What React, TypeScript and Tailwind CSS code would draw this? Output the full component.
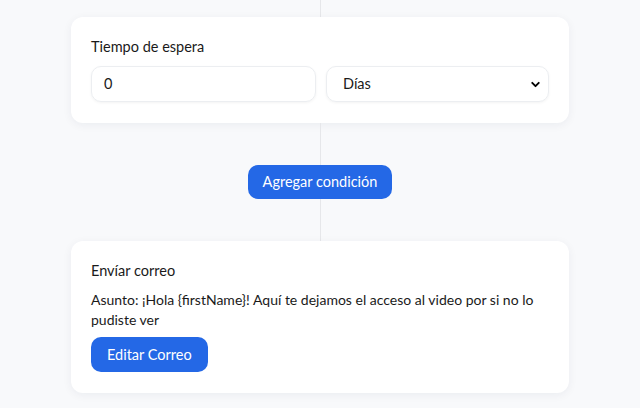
import { ChevronDown } from 'lucide-react'

function Connector({ h }: { h: string }) {
  return <div className={`w-px bg-[#e6e7ea] ${h}`} />
}

export default function App() {
  return (
    <div className="min-h-[408px] w-full bg-[#f8f9fb] flex flex-col items-center font-['Lato',sans-serif] text-[#1a1a1a] text-[14.5px]">
      <Connector h="h-[17px]" />

      {/* Wait time card */}
      <div className="w-[498px] bg-white rounded-xl shadow-[0_2px_10px_rgba(20,30,60,0.06)] px-5 pt-[20px] pb-[21px]">
        <p className="leading-5 mb-[9px]">Tiempo de espera</p>
        <div className="flex gap-[10px]">
          <div className="flex-1 h-[36px] rounded-[10px] border border-[#eceef1] shadow-[0_1px_3px_rgba(0,0,0,0.05)] flex items-center px-3">
            0
          </div>
          <div className="flex-1 h-[36px] rounded-[10px] border border-[#eceef1] shadow-[0_1px_3px_rgba(0,0,0,0.05)] flex items-center justify-between pl-4 pr-[6px]">
            <span>Días</span>
            <ChevronDown size={13} strokeWidth={3.5} className="text-black" />
          </div>
        </div>
      </div>

      <Connector h="h-[42px]" />

      <button className="h-[34px] px-[15px] rounded-[10px] bg-[#2468e6] text-white leading-5">
        Agregar condición
      </button>

      <Connector h="h-[42px]" />

      {/* Send email card */}
      <div className="w-[498px] bg-white rounded-xl shadow-[0_2px_10px_rgba(20,30,60,0.06)] px-5 pt-[20px] pb-[21px]">
        <p className="leading-5 mb-[9px]">Envíar correo</p>
        <p className="text-[14px] leading-[20px] mb-[7px]">
          {'Asunto: ¡Hola {firstName}! Aquí te dejamos el acceso al video por si no lo pudiste ver'}
        </p>
        <button className="h-[35px] px-4 rounded-[10px] bg-[#2468e6] text-white leading-5">
          Editar Correo
        </button>
      </div>
    </div>
  )
}
